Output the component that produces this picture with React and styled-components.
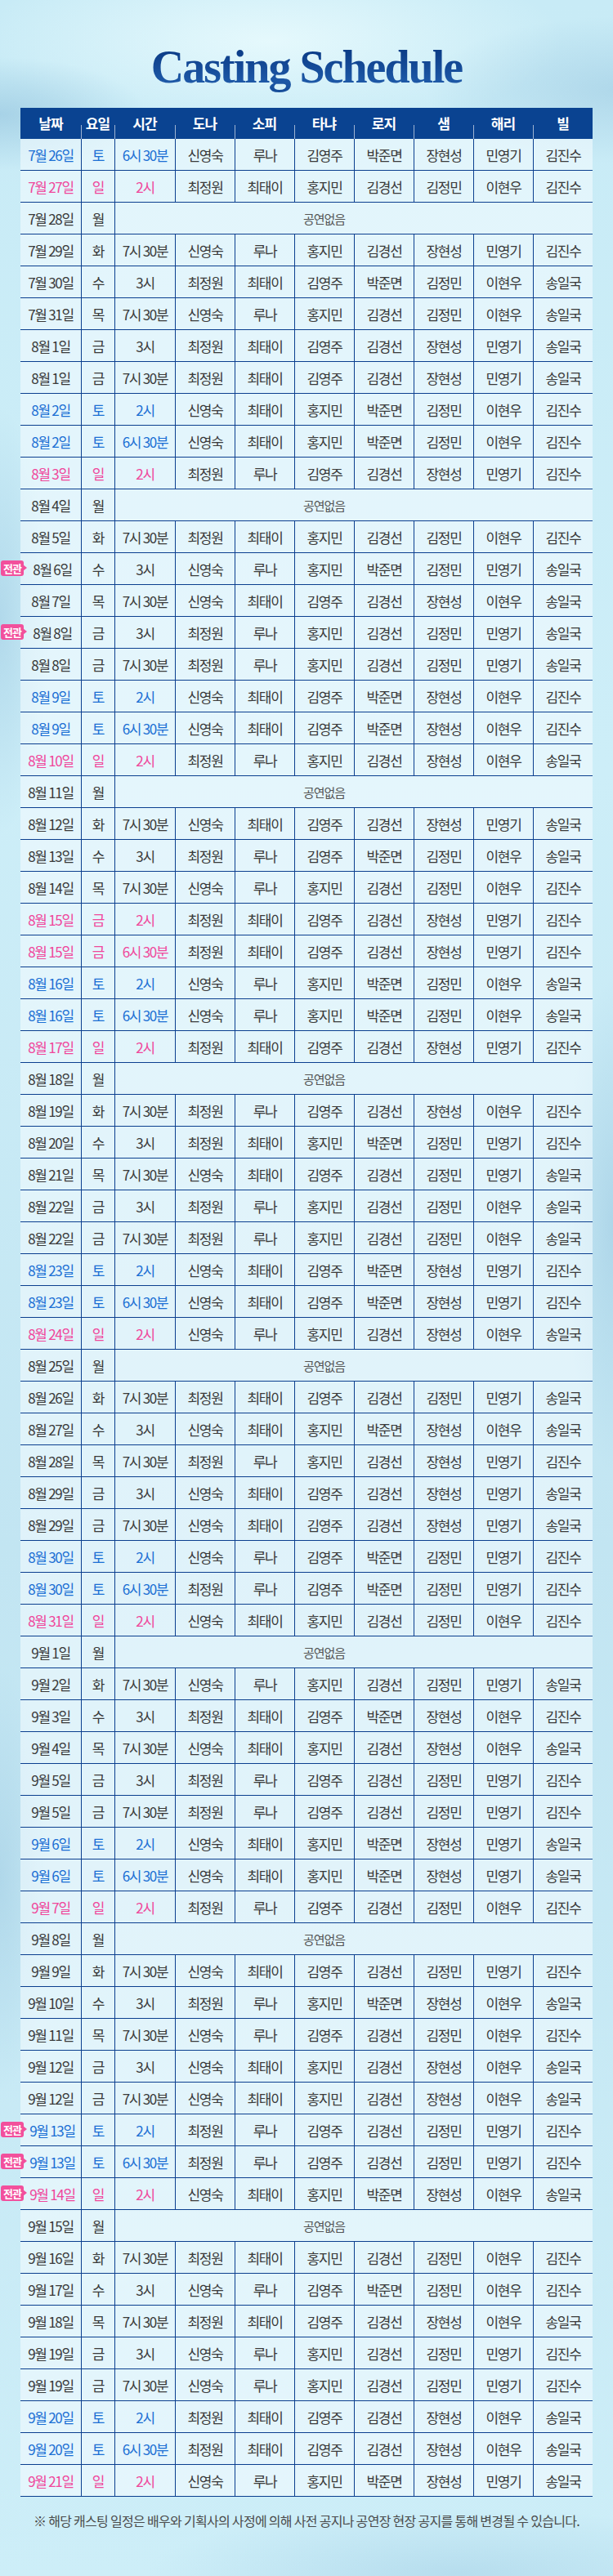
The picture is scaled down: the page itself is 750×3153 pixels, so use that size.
import styled, { createGlobalStyle } from 'styled-components';

const GlobalStyle = createGlobalStyle`
  * { box-sizing: border-box; }
  body {
    margin: 0;
    background: #c9eaf5;
    font-family: 'Noto Sans CJK KR', 'Noto Sans', sans-serif;
  }
`;

const NAVY = '#0b3f8f';
const COLS = '74px 41px 74px repeat(7, 73px)';

const HEADS = ['날짜', '요일', '시간', '도나', '소피', '타냐', '로지', '샘', '해리', '빌'];

// "*" = 전관 badge, "!" = holiday
const RAW = `
7월 26일|토|6시 30분|신영숙 루나 김영주 박준면 장현성 민영기 김진수
7월 27일|일|2시|최정원 최태이 홍지민 김경선 김정민 이현우 김진수
7월 28일|월
7월 29일|화|7시 30분|신영숙 루나 홍지민 김경선 장현성 민영기 김진수
7월 30일|수|3시|최정원 최태이 김영주 박준면 김정민 이현우 송일국
7월 31일|목|7시 30분|신영숙 루나 홍지민 김경선 김정민 이현우 송일국
8월 1일|금|3시|최정원 최태이 김영주 김경선 장현성 민영기 송일국
8월 1일|금|7시 30분|최정원 최태이 김영주 김경선 장현성 민영기 송일국
8월 2일|토|2시|신영숙 최태이 홍지민 박준면 김정민 이현우 김진수
8월 2일|토|6시 30분|신영숙 최태이 홍지민 박준면 김정민 이현우 김진수
8월 3일|일|2시|최정원 루나 김영주 김경선 장현성 민영기 김진수
8월 4일|월
8월 5일|화|7시 30분|최정원 최태이 홍지민 김경선 김정민 이현우 김진수
*8월 6일|수|3시|신영숙 루나 홍지민 박준면 김정민 민영기 송일국
8월 7일|목|7시 30분|신영숙 최태이 김영주 김경선 장현성 이현우 송일국
*8월 8일|금|3시|최정원 루나 홍지민 김경선 김정민 민영기 송일국
8월 8일|금|7시 30분|최정원 루나 홍지민 김경선 김정민 민영기 송일국
8월 9일|토|2시|신영숙 최태이 김영주 박준면 장현성 이현우 김진수
8월 9일|토|6시 30분|신영숙 최태이 김영주 박준면 장현성 이현우 김진수
8월 10일|일|2시|최정원 루나 홍지민 김경선 장현성 이현우 송일국
8월 11일|월
8월 12일|화|7시 30분|신영숙 최태이 김영주 김경선 장현성 민영기 송일국
8월 13일|수|3시|최정원 루나 김영주 박준면 김정민 이현우 송일국
8월 14일|목|7시 30분|신영숙 루나 홍지민 김경선 김정민 이현우 김진수
!8월 15일|금|2시|최정원 최태이 김영주 김경선 장현성 민영기 김진수
!8월 15일|금|6시 30분|최정원 최태이 김영주 김경선 장현성 민영기 김진수
8월 16일|토|2시|신영숙 루나 홍지민 박준면 김정민 이현우 송일국
8월 16일|토|6시 30분|신영숙 루나 홍지민 박준면 김정민 이현우 송일국
8월 17일|일|2시|최정원 최태이 김영주 김경선 장현성 민영기 김진수
8월 18일|월
8월 19일|화|7시 30분|최정원 루나 김영주 김경선 장현성 이현우 김진수
8월 20일|수|3시|최정원 최태이 홍지민 박준면 김정민 민영기 김진수
8월 21일|목|7시 30분|신영숙 최태이 김영주 김경선 김정민 민영기 송일국
8월 22일|금|3시|최정원 루나 홍지민 김경선 김정민 이현우 송일국
8월 22일|금|7시 30분|최정원 루나 홍지민 김경선 김정민 이현우 송일국
8월 23일|토|2시|신영숙 최태이 김영주 박준면 장현성 민영기 김진수
8월 23일|토|6시 30분|신영숙 최태이 김영주 박준면 장현성 민영기 김진수
8월 24일|일|2시|신영숙 루나 홍지민 김경선 장현성 이현우 송일국
8월 25일|월
8월 26일|화|7시 30분|최정원 최태이 김영주 김경선 김정민 민영기 송일국
8월 27일|수|3시|신영숙 최태이 홍지민 박준면 장현성 이현우 송일국
8월 28일|목|7시 30분|최정원 루나 홍지민 김경선 장현성 민영기 김진수
8월 29일|금|3시|신영숙 최태이 김영주 김경선 장현성 민영기 송일국
8월 29일|금|7시 30분|신영숙 최태이 김영주 김경선 장현성 민영기 송일국
8월 30일|토|2시|신영숙 루나 김영주 박준면 김정민 민영기 김진수
8월 30일|토|6시 30분|최정원 루나 김영주 박준면 김정민 민영기 김진수
8월 31일|일|2시|신영숙 최태이 홍지민 김경선 김정민 이현우 김진수
9월 1일|월
9월 2일|화|7시 30분|신영숙 루나 홍지민 김경선 김정민 민영기 송일국
9월 3일|수|3시|최정원 최태이 김영주 박준면 장현성 이현우 김진수
9월 4일|목|7시 30분|신영숙 최태이 홍지민 김경선 장현성 이현우 송일국
9월 5일|금|3시|최정원 루나 김영주 김경선 김정민 민영기 김진수
9월 5일|금|7시 30분|최정원 루나 김영주 김경선 김정민 민영기 김진수
9월 6일|토|2시|신영숙 최태이 홍지민 박준면 장현성 민영기 송일국
9월 6일|토|6시 30분|신영숙 최태이 홍지민 박준면 장현성 민영기 송일국
9월 7일|일|2시|최정원 루나 김영주 김경선 김정민 이현우 김진수
9월 8일|월
9월 9일|화|7시 30분|신영숙 최태이 김영주 김경선 김정민 민영기 김진수
9월 10일|수|3시|최정원 루나 홍지민 박준면 장현성 이현우 송일국
9월 11일|목|7시 30분|신영숙 루나 김영주 김경선 김정민 이현우 김진수
9월 12일|금|3시|신영숙 최태이 홍지민 김경선 장현성 이현우 송일국
9월 12일|금|7시 30분|신영숙 최태이 홍지민 김경선 장현성 이현우 송일국
*9월 13일|토|2시|최정원 루나 김영주 김경선 김정민 민영기 김진수
*9월 13일|토|6시 30분|최정원 루나 김영주 김경선 김정민 민영기 김진수
*9월 14일|일|2시|신영숙 최태이 홍지민 박준면 장현성 이현우 송일국
9월 15일|월
9월 16일|화|7시 30분|최정원 최태이 홍지민 김경선 김정민 이현우 김진수
9월 17일|수|3시|신영숙 루나 김영주 박준면 김정민 이현우 김진수
9월 18일|목|7시 30분|최정원 최태이 김영주 김경선 장현성 이현우 송일국
9월 19일|금|3시|신영숙 루나 홍지민 김경선 김정민 민영기 김진수
9월 19일|금|7시 30분|신영숙 루나 홍지민 김경선 김정민 민영기 김진수
9월 20일|토|2시|최정원 최태이 김영주 김경선 장현성 이현우 송일국
9월 20일|토|6시 30분|최정원 최태이 김영주 김경선 장현성 이현우 송일국
9월 21일|일|2시|신영숙 루나 홍지민 박준면 장현성 민영기 송일국
`;

const rows = RAW.trim().split('\n').map((line) => {
  let date = line.split('|')[0];
  const badge = date.startsWith('*');
  const holiday = date.startsWith('!');
  date = date.replace(/^[*!]/, '');
  const [, day, time, cast] = line.split('|');
  let tone = 'plain';
  if (day === '토') tone = 'sat';
  if (day === '일' || holiday) tone = 'sun';
  return { date, day, time, cast: cast ? cast.split(' ') : null, badge, tone };
});

const TONES = {
  plain: '#3a3a3a',
  sat: '#1b6fd4',
  sun: '#f0479b',
};

const Page = styled.div`
  width: 750px;
  min-height: 3153px;
  overflow: hidden;
  background:
    radial-gradient(ellipse 180px 70px at 0px 140px, rgba(140, 190, 218, 0.55), transparent),
    radial-gradient(ellipse 240px 90px at 760px 110px, rgba(150, 196, 222, 0.5), transparent),
    radial-gradient(ellipse 360px 110px at 330px 50px, rgba(232, 250, 253, 0.9), transparent),
    radial-gradient(ellipse 60px 260px at 0px 760px, rgba(150, 196, 222, 0.5), transparent),
    radial-gradient(ellipse 60px 300px at 750px 1500px, rgba(150, 196, 222, 0.5), transparent),
    radial-gradient(ellipse 60px 260px at 0px 2300px, rgba(150, 196, 222, 0.45), transparent),
    radial-gradient(ellipse 380px 80px at 560px 3150px, rgba(160, 205, 228, 0.5), transparent),
    linear-gradient(180deg, #c8ebf6 0%, #cdeef8 30%, #c2e5f2 60%, #cdeef8 100%);
`;

const Title = styled.h1`
  margin: 0;
  padding-top: 54px;
  height: 132px;
  text-align: center;
  font-family: 'Liberation Serif', 'DejaVu Serif', serif;
  font-weight: 700;
  font-size: 56px;
  line-height: 56px;
  letter-spacing: -2px;
  background: linear-gradient(180deg, #0d3f8c 0%, #0a3a85 45%, #1d58a6 75%, #0b3b84 100%);
  -webkit-background-clip: text;
  background-clip: text;
  color: transparent;
`;

const Table = styled.div`
  width: 700px;
  margin: 0 auto;
`;

const HeadRow = styled.div`
  display: grid;
  grid-template-columns: ${COLS};
  height: 38px;
  background: #0a4391;
`;

const HeadCell = styled.div`
  position: relative;
  display: flex;
  align-items: center;
  justify-content: center;
  color: #fff;
  font-size: 17px;
  font-weight: 700;
  letter-spacing: -1px;
  padding-bottom: 2px;

  &:not(:first-child)::before {
    content: '';
    position: absolute;
    left: 0;
    bottom: 0;
    width: 1px;
    height: 17px;
    background: #9fb4d2;
  }
`;

const Row = styled.div`
  display: grid;
  grid-template-columns: ${COLS};
  height: 39px;
  border-bottom: 1px solid ${NAVY};
  background: rgba(245, 252, 255, 0.58);
`;

const Cell = styled.div`
  position: relative;
  display: flex;
  align-items: center;
  justify-content: center;
  font-size: 17px;
  letter-spacing: -1.3px;
  white-space: nowrap;
  color: ${(p) => TONES[p.$tone || 'plain']};
  padding-left: ${(p) => (p.$shift ? '4px' : '0')};

  & + & {
    border-left: 1px solid ${NAVY};
  }
`;

const Empty = styled.div`
  grid-column: 3 / span 8;
  display: flex;
  align-items: center;
  justify-content: center;
  padding-right: 73px;
  border-left: 1px solid ${NAVY};
  font-size: 15px;
  letter-spacing: -1px;
  color: #555;
`;

const Badge = styled.span`
  position: absolute;
  left: -24px;
  top: 9px;
  height: 19px;
  padding: 0 3px;
  border-radius: 3px;
  background: #f2509c;
  color: #fff;
  font-size: 13px;
  font-weight: 700;
  line-height: 19px;
  letter-spacing: -1px;

  &::after {
    content: '';
    position: absolute;
    right: -4px;
    top: 5px;
    border-left: 5px solid #f2509c;
    border-top: 4.5px solid transparent;
    border-bottom: 4.5px solid transparent;
  }
`;

const Note = styled.p`
  margin: 19px 0 0;
  text-align: center;
  font-size: 16px;
  line-height: 20px;
  letter-spacing: -0.7px;
  color: #4a4a4a;
`;

function ScheduleRow({ row }) {
  return (
    <Row>
      <Cell $tone={row.tone} $shift={row.badge}>
        {row.badge && <Badge>전관</Badge>}
        {row.date}
      </Cell>
      <Cell $tone={row.tone}>{row.day}</Cell>
      {row.cast ? (
        <>
          <Cell $tone={row.tone}>{row.time}</Cell>
          {row.cast.map((name, i) => (
            <Cell key={i}>{name}</Cell>
          ))}
        </>
      ) : (
        <Empty>공연없음</Empty>
      )}
    </Row>
  );
}

export default function App() {
  return (
    <Page>
      <GlobalStyle />
      <Title>Casting Schedule</Title>
      <Table>
        <HeadRow>
          {HEADS.map((h) => (
            <HeadCell key={h}>{h}</HeadCell>
          ))}
        </HeadRow>
        {rows.map((row, i) => (
          <ScheduleRow key={i} row={row} />
        ))}
      </Table>
      <Note>※ 해당 캐스팅 일정은 배우와 기획사의 사정에 의해 사전 공지나 공연장 현장 공지를 통해 변경될 수 있습니다.</Note>
    </Page>
  );
}
